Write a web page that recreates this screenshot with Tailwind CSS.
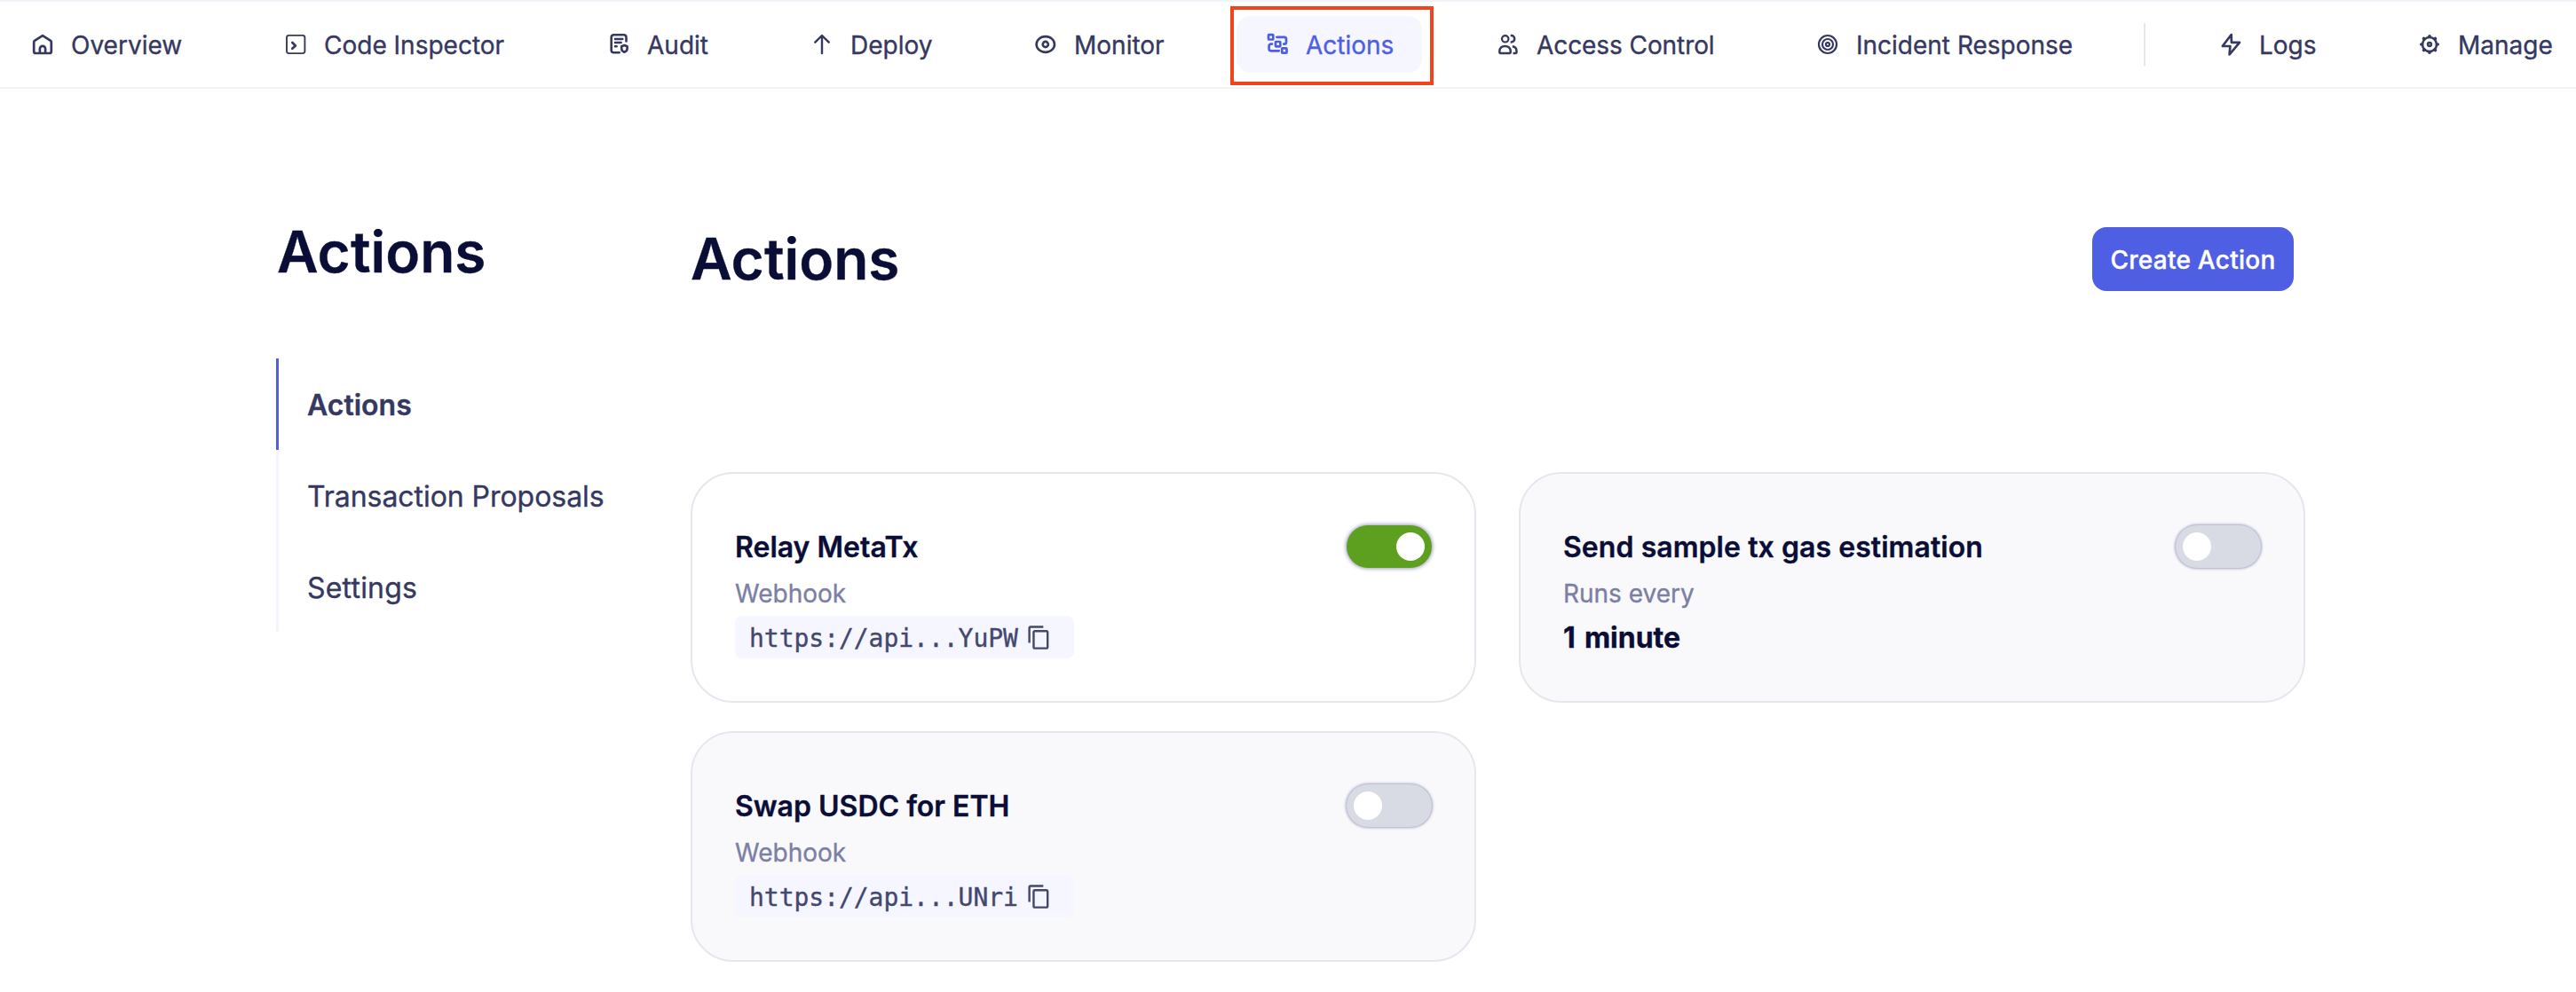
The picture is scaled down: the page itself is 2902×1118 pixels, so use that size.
<!DOCTYPE html>
<html lang="en">
<head>
<meta charset="utf-8">
<title>Actions</title>
<script src="https://cdn.jsdelivr.net/npm/@tailwindcss/browser@4"></script>
</head>
<body class="h-[1118px] overflow-hidden bg-white font-['Inter',sans-serif] text-[#353860] antialiased [-webkit-text-stroke:0.35px]">

<svg class="hidden" xmlns="http://www.w3.org/2000/svg">
  <symbol id="copy" viewBox="0 0 24 24"><path fill="currentColor" d="M16 1H4c-1.1 0-2 .9-2 2v14h2V3h12V1zm3 4H8c-1.1 0-2 .9-2 2v14c0 1.100.9 2 2 2h11c1.100 0 2-.9 2-2V7c0-1.100-.9-2-2-2zm0 16H8V7h11v14z"/></symbol>
</svg>

<nav class="grid h-[100px] grid-cols-[285px_364px_229px_252px_261px_260px_360px_402px_52px_224px_212px] items-center overflow-hidden border-y-2 border-[#f2f2f9] pl-[2px] text-[28px] whitespace-nowrap">
  <a class="flex h-16 w-fit items-center gap-[18px] rounded-2xl px-8">
    <svg class="size-7 shrink-0" viewBox="0 0 28 28" fill="none" stroke="currentColor" stroke-width="2.700" stroke-linejoin="round"><path d="M4.200 11.500a2 2 0 0 1 .8-1.600L14 4.200l9 5.700a2 2 0 0 1 .8 1.600V22a2 2 0 0 1-2 2H6.200a2 2 0 0 1-2-2z"/><path d="M10.900 24v-5a3.100 3.100 0 0 1 6.200 0V24"/></svg>
    <span class="pt-0.5">Overview</span>
  </a>
  <a class="flex h-16 w-fit items-center gap-[18px] rounded-2xl px-8">
    <svg class="size-7 shrink-0" viewBox="0 0 28 28" fill="none" stroke="currentColor" stroke-linejoin="round" stroke-linecap="round"><rect x="4" y="3.900" width="20.400" height="20.200" rx="2.500" stroke-width="1.900"/><path stroke-width="2.700" d="m10.300 12 3.600 3.400-3.600 3.400"/></svg>
    <span class="pt-0.5">Code Inspector</span>
  </a>
  <a class="flex h-16 w-fit items-center gap-[18px] rounded-2xl px-8">
    <svg class="size-7 shrink-0" viewBox="0 0 28 28" fill="none" stroke="currentColor" stroke-width="2.600" stroke-linejoin="round" stroke-linecap="round"><path d="M22.500 10.500V6a2.800 2.800 0 0 0-2.800-2.800H8.500A2.800 2.800 0 0 0 5.700 6v14.500A2.800 2.800 0 0 0 8.500 23.300h6.200M10 8h8.200M10 12h6.600M10 16.300h1.600M20.400 15l3.200 1.200v2.600c0 2-1.300 3.300-3.200 4-1.900-.7-3.200-2-3.200-4v-2.600z"/></svg>
    <span class="pt-0.5">Audit</span>
  </a>
  <a class="flex h-16 w-fit items-center gap-[18px] rounded-2xl px-8">
    <svg class="size-7 shrink-0" viewBox="0 0 28 28" fill="none" stroke="currentColor" stroke-width="2.400" stroke-linejoin="round" stroke-linecap="round"><path d="M14 24V4.200M6.300 11.700l7.700-7.700 7.700 7.700"/></svg>
    <span class="pt-0.5">Deploy</span>
  </a>
  <a class="flex h-16 w-fit items-center gap-[18px] rounded-2xl px-8">
    <svg class="size-7 shrink-0" viewBox="0 0 28 28" fill="none" stroke="currentColor" stroke-width="2.600"><path d="M3.600 14C3.600 9.500 7.800 5.100 13.800 5.100S24 9.500 24 14s-4.200 8.900-10.200 8.900S3.600 18.500 3.600 14z"/><circle cx="13.800" cy="14" r="3.100"/></svg>
    <span class="pt-0.5">Monitor</span>
  </a>
  <a class="relative flex h-16 w-fit items-center gap-[18px] rounded-2xl bg-[#f5f6ff] px-8 text-[#4f5fe3]">
    <svg class="size-7 shrink-0" viewBox="0 0 28 28" fill="none" stroke="currentColor" stroke-width="2.700" stroke-linejoin="round" stroke-linecap="round"><rect x="4" y="3.200" width="5.300" height="5.300" rx=".6"/><rect x="12" y="11" width="5.300" height="5.300" rx=".6"/><rect x="19.200" y="18.300" width="5.300" height="5.300" rx=".6"/><path d="M13.400 5.800h8.400a2.200 2.200 0 0 1 2.200 2.200v3.400a2.200 2.200 0 0 1-2.200 2.200h-.6M8 13.600h-1.200A2.200 2.200 0 0 0 4.600 15.800v3.300a2.200 2.200 0 0 0 2.200 2.200h9"/></svg>
    <span class="pt-0.5">Actions</span>
    <span class="absolute -top-[11px] -left-[7px] h-[89px] w-[229px] border-4 border-[#f0441c]"></span>
  </a>
  <a class="flex h-16 w-fit items-center gap-[18px] rounded-2xl px-8">
    <svg class="size-7 shrink-0" viewBox="0 0 28 28" fill="none" stroke="currentColor" stroke-width="2.500" stroke-linejoin="round" stroke-linecap="butt"><circle cx="10.700" cy="7.800" r="3.700" stroke-width="2.200"/><path d="M16.700 4.100h.8a3.700 3.700 0 0 1 0 7.400h-.8M4.300 22.500v-.7c0-3.600 2.600-5.900 6.200-5.900s6.200 2.300 6.200 5.900v.7c0 .9-.6 1.400-1.400 1.400H5.700c-.8 0-1.400-.5-1.400-1.400zM18.800 16.300c2.800.4 4.700 2.700 4.700 5.500v.7c0 .9-.6 1.400-1.400 1.400h-2.600"/></svg>
    <span class="pt-0.5 tracking-[-0.08px]">Access Control</span>
  </a>
  <a class="flex h-16 w-fit items-center gap-[18px] rounded-2xl px-8">
    <svg class="size-7 shrink-0" viewBox="0 0 28 28" fill="none" stroke="currentColor" stroke-width="2.200"><circle cx="14" cy="14" r="10"/><circle cx="14" cy="14" r="6"/><circle cx="14" cy="14" r="2"/></svg>
    <span class="pt-0.5">Incident Response</span>
  </a>
  <span class="h-12 w-0.5 bg-[#e6e6ef]"></span>
  <a class="flex h-16 w-fit items-center gap-[18px] rounded-2xl px-8">
    <svg class="size-7 shrink-0" viewBox="0 0 28 28" fill="none" stroke="currentColor" stroke-width="2.700" stroke-linejoin="round"><path d="M14.700 3 4.800 16h8.600l-.8 9.500L24 11.800h-9.100z"/></svg>
    <span class="pt-0.5">Logs</span>
  </a>
  <a class="flex h-16 w-fit items-center gap-[18px] rounded-2xl px-8">
    <svg class="size-7 shrink-0" viewBox="0 0 28 28" fill="none" stroke="currentColor" stroke-width="2.500" stroke-linecap="round"><circle cx="14" cy="14" r="8"/><circle cx="14" cy="14" r="1.900"/><path stroke-width="3.600" d="M14 5.500v-.7M14 22.500v.7M5.500 14h-.7M22.500 14h.7M8 8l-.5-.5M20 8l.5-.5M8 20l-.5.5M20 20l.5.5"/></svg>
    <span class="pt-0.5">Manage</span>
  </a>
</nav>

<div class="flex pt-36 pl-[311px]">
  <aside class="w-[467px]">
    <h1 class="pl-px text-[64px] leading-[80px] font-semibold text-[#0a0e36]">Actions</h1>
    <ul class="mt-20 text-[32px]">
      <li class="flex h-[103px] items-center border-l-[3px] border-[#4f5fe3] pt-0.5 pl-8 font-semibold">Actions</li>
      <li class="flex h-[103px] items-center border-l-[3px] border-[#f4f4fa] pt-0.5 pl-8 tracking-[-0.05px]">Transaction Proposals</li>
      <li class="flex h-[102px] items-center border-l-[3px] border-[#f4f4fa] pt-1 pl-8 tracking-[0.2px]">Settings</li>
    </ul>
  </aside>

  <main class="w-[1819px]">
    <header class="flex h-24 items-center justify-between pr-[13px]">
      <h2 class="text-[64px] leading-[80px] font-semibold text-[#0a0e36]">Actions</h2>
      <button class="h-[72px] w-[227px] rounded-2xl bg-[#4f5fe3] pt-px text-[28px] font-medium tracking-[0.25px] text-white">Create Action</button>
    </header>

    <section class="mt-48 grid grid-cols-[885px_886px] gap-x-12 gap-y-8">
      <article class="flex h-[260px] items-start justify-between rounded-[48px] border-2 border-[#e7e6ee] bg-white px-12">
        <div class="pt-[63px]">
          <h3 class="text-[32px] leading-10 font-semibold text-[#0a0e36]">Relay MetaTx</h3>
          <p class="mt-4 text-[28px] leading-8 text-[#7c7fa3]">Webhook</p>
          <div class="mt-[9px] flex h-12 w-[382px] items-center gap-[9px] rounded-lg bg-[#f5f6ff] px-4 text-[#44476e]">
            <code class="pt-[3px] font-['DejaVu_Sans_Mono',monospace] text-[28px] leading-8 tracking-[-0.03px]">https://api...YuPW</code>
            <svg class="size-[29px]"><use href="#copy"/></svg>
          </div>
        </div>
        <div class="mt-[58px] flex h-12 w-24 justify-end rounded-full bg-[#5da020] p-2 shadow-[0_0_4px_1px_#9c9cb8]"><span class="size-8 rounded-full bg-white"></span></div>
      </article>

      <article class="flex h-[260px] items-start justify-between rounded-[48px] border-2 border-[#e7e6ee] bg-[#f9f9fc] px-12">
        <div class="pt-[63px]">
          <h3 class="text-[32px] leading-10 font-semibold tracking-[0.06px] text-[#0a0e36]">Send sample tx gas estimation</h3>
          <p class="mt-4 text-[28px] leading-8 text-[#7c7fa3]">Runs every</p>
          <p class="mt-2.5 text-[32px] leading-[48px] font-bold text-[#0a0e36] [word-spacing:2.5px]">1 minute</p>
        </div>
        <div class="mt-[58px] flex h-12 w-24 rounded-full bg-[#d8dbe4] p-2 shadow-[0_0_3px_1px_#a2a4be]"><span class="size-8 rounded-full bg-white"></span></div>
      </article>

      <article class="flex h-[260px] items-start justify-between rounded-[48px] border-2 border-[#e7e6ee] bg-[#f9f9fc] px-12">
        <div class="pt-[63px]">
          <h3 class="text-[32px] leading-10 font-semibold text-[#0a0e36]">Swap USDC for ETH</h3>
          <p class="mt-4 text-[28px] leading-8 text-[#7c7fa3]">Webhook</p>
          <div class="mt-[9px] flex h-12 w-[382px] items-center gap-[9px] rounded-lg bg-[#f5f6ff] px-4 text-[#44476e]">
            <code class="pt-[3px] font-['DejaVu_Sans_Mono',monospace] text-[28px] leading-8 tracking-[-0.03px]">https://api...UNri</code>
            <svg class="size-[29px]"><use href="#copy"/></svg>
          </div>
        </div>
        <div class="mt-[58px] flex h-12 w-24 rounded-full bg-[#d8dbe4] p-2 shadow-[0_0_3px_1px_#a2a4be]"><span class="size-8 rounded-full bg-white"></span></div>
      </article>
    </section>
  </main>
</div>
</body>
</html>
